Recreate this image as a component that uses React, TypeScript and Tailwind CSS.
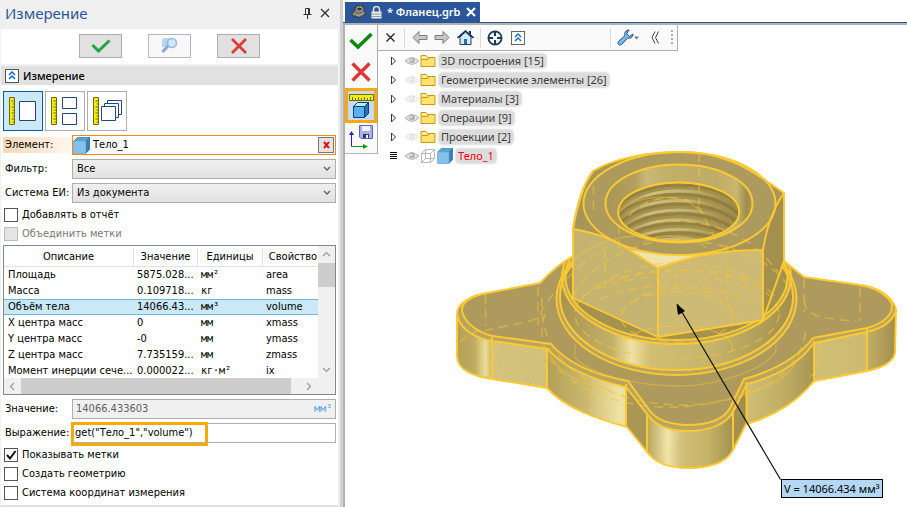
import React, { useState } from "react";

const UI = "font-['DejaVu_Sans_Condensed','DejaVu_Sans',sans-serif] text-[11px] leading-4";
const SEGOE = "font-['Noto_Sans',sans-serif]";

function Cube({ size = 17 }: { size?: number }) {
  return (
    <svg width={size} height={size} viewBox="0 0 17 17" className="shrink-0" aria-hidden="true">
      <path d="M0.5 4.5 4.5 0.5H16.5L12.5 4.5Z" fill="#5aa5d8" stroke="#4a90c4" />
      <path d="M12.5 4.5 16.5 0.5V12.5L12.5 16.5Z" fill="#3a7eb6" stroke="#3a7eb6" />
      <path d="M0.5 4.5H12.5V16.5H0.5Z" fill="#85c0e6" stroke="#7ab6de" />
    </svg>
  );
}

function Ruler() {
  return (
    <g>
      <path d="M1 1H6V28H1Z" fill="#f3ee0c" stroke="#6e6a1a" />
      <path d="M3 4.5H6M4 7.5H6M3 10.5H6M4 13.5H6M3 16.5H6M4 19.5H6M3 22.5H6M4 25.5H6" stroke="#6e6a1a" />
    </g>
  );
}

function ModeButton({ label, active = false, children }: { label: string; active?: boolean; children: React.ReactNode }) {
  return (
    <button
      type="button"
      aria-label={label}
      aria-pressed={active}
      className={`flex size-10 items-center justify-start border pl-1 ${active ? "border-[#005a9e] bg-[#cce8f7]" : "border-[#adadad] bg-white"}`}
    >
      <svg width="32" height="30" viewBox="0 0 32 30" fill="none">
        <g transform="translate(0.5 0.5)">
          <Ruler />
          <g stroke="#1c4a7e" fill="white">{children}</g>
        </g>
      </svg>
    </button>
  );
}

function Check({ id, label, checked = false, disabled = false }: { id: string; label: string; checked?: boolean; disabled?: boolean }) {
  const [on, setOn] = useState(checked);
  return (
    <div className="flex h-[14px] items-center gap-[4px] pl-px">
      <span className="relative flex">
        <input
          id={id}
          type="checkbox"
          checked={on}
          disabled={disabled}
          onChange={() => setOn(!on)}
          className="size-[14px] appearance-none border border-[#555] bg-white disabled:border-[#bcbcbc] disabled:bg-[#e4e4e4]"
        />
        {on && (
          <svg width="14" height="14" viewBox="0 0 14 14" className="pointer-events-none absolute inset-0">
            <path d="M3 7 6 10.5 11.5 3" fill="none" stroke="#111" strokeWidth="2" />
          </svg>
        )}
      </span>
      <label htmlFor={id} className={disabled ? "text-[#787878]" : "text-black"}>{label}</label>
    </div>
  );
}

function Field({ id, label, highlight = false, children }: { id: string; label: string; highlight?: boolean; children: React.ReactNode }) {
  return (
    <div className="flex h-5 items-center">
      <label htmlFor={id} className={`w-[69px] shrink-0 whitespace-nowrap pl-[2px] ${highlight ? "bg-linear-to-r from-[#fbd9b8] to-[#fff7ef]" : ""}`}>
        {label}
      </label>
      {children}
    </div>
  );
}

function Select({ id, options }: { id: string; options: string[] }) {
  return (
    <span className="relative flex h-5 min-w-0 flex-1">
      <select id={id} className="w-full appearance-none border border-[#adadad] bg-linear-to-b from-[#efefef] to-[#e2e2e2] px-1">
        {options.map((o) => (
          <option key={o}>{o}</option>
        ))}
      </select>
      <svg width="8" height="6" viewBox="0 0 8 6" className="pointer-events-none absolute right-[5px] top-[7px]">
        <path d="M1 1 4 4 7 1" fill="none" stroke="#606060" strokeWidth="1.3" />
      </svg>
    </span>
  );
}

const rows = [
  ["Площадь", "5875.028...", "мм²", "area"],
  ["Масса", "0.109718...", "кг", "mass"],
  ["Объём тела", "14066.43...", "мм³", "volume"],
  ["X центра масс", "0", "мм", "xmass"],
  ["Y центра масс", "-0", "мм", "ymass"],
  ["Z центра масс", "7.735159...", "мм", "zmass"],
  ["Момент инерции сече...", "0.000022...", "кг·м²", "ix"],
];

function Chevron({ d }: { d: string }) {
  return (
    <svg width="9" height="9" viewBox="0 0 9 9" fill="none" stroke="#9a9a9a" strokeWidth="1.2" aria-hidden="true">
      <path d={d} />
    </svg>
  );
}

function PropertyTable() {
  return (
    <div className="flex h-[150px] flex-col border border-[#828790] bg-white">
      <div className="flex min-h-0 flex-1">
        <div className="min-w-0 flex-1 overflow-hidden pt-[2px]">
          <table className="w-[320px] table-fixed border-separate border-spacing-0 whitespace-nowrap">
            <colgroup>
              <col className="w-[130px]" />
              <col className="w-[64px]" />
              <col className="w-[65px]" />
              <col />
            </colgroup>
            <thead>
              <tr className="h-[19px]">
                {["Описание", "Значение", "Единицы", "Свойство"].map((h) => (
                  <th key={h} className="border-b border-r border-[#e2e2e2] p-0 font-normal">{h}</th>
                ))}
              </tr>
            </thead>
            <tbody>
              {rows.map((r, i) => {
                const cell = i === 2 ? "h-4 border-y border-[#6cb8dc] bg-[#cbe8f6] p-0 leading-[14px]" : "h-4 p-0 leading-4";
                return (
                  <tr key={r[0]}>
                    <td className={`${cell} pl-1`}>{r[0]}</td>
                    <td className={`${cell} pl-[3px]`}>{r[1]}</td>
                    <td className={`${cell} pl-[3px] font-['DejaVu_Sans_Mono',monospace] text-[10px]`}>{r[2]}</td>
                    <td className={`${cell} pl-[3px]`}>{r[3]}</td>
                  </tr>
                );
              })}
            </tbody>
          </table>
        </div>
        <div className="flex w-[17px] flex-col items-center bg-[#f0f0f0]">
          <span className="flex h-[17px] items-center"><Chevron d="M1 6 4.5 2.500 8 6" /></span>
          <span className="h-6 w-full bg-[#cdcdcd]" />
          <span className="mt-auto flex h-[17px] items-center"><Chevron d="M1 3 4.5 6.500 8 3" /></span>
        </div>
      </div>
      <div className="flex h-4 items-center bg-[#f0f0f0]">
        <span className="flex w-[17px] justify-center"><Chevron d="M6 1 2.500 4.5 6 8" /></span>
        <span className="h-full flex-1 bg-[#cdcdcd]" />
        <span className="mr-[17px] flex w-[27px] justify-center pl-2"><Chevron d="M3 1 6.500 4.5 3 8" /></span>
      </div>
    </div>
  );
}

function MeasurePanel() {
  return (
    <aside className={`${UI} flex w-[343px] shrink-0 flex-col border-r-[3px] border-[#cfcfcf] bg-[#f0f0f0] pl-px pr-[2px] text-black`}>
      <header className="flex h-[29px] items-center pb-1 pl-1 pr-2">
        <h1 className={`${SEGOE} flex-1 text-[15px] leading-6 text-[#2b579a]`}>Измерение</h1>
        <button type="button" aria-label="Закрепить" className="mr-2">
          <svg width="9" height="12" viewBox="0 0 9 12" fill="none" stroke="#333">
            <path d="M2.500 7V1.500H6.500V7M5.500 1.500V7M0.500 7.500H8.500M4.500 8V12" />
          </svg>
        </button>
        <button type="button" aria-label="Закрыть">
          <svg width="10" height="10" viewBox="0 0 10 10" stroke="#333" strokeWidth="1.3"><path d="M1 1 9 9M9 1 1 9" /></svg>
        </button>
      </header>

      <div className="flex h-[35px] items-center justify-center gap-[26px] bg-white pb-[2px]">
        <button type="button" aria-label="Принять" className="flex h-6 w-[43px] items-center justify-center border border-[#adadad] bg-[#e1e1e1]">
          <svg width="20" height="14" viewBox="0 0 20 14"><path d="M1.500 6 7.500 12 18.500 1.500" fill="none" stroke="#27a243" strokeWidth="3" /></svg>
        </button>
        <button type="button" aria-label="Просмотр" className="flex h-6 w-[43px] items-center justify-center border border-[#b4b8bb] bg-[#f8f8f8]">
          <svg width="17" height="17" viewBox="0 0 17 17">
            <path d="M1 3 3 1H12L10 3V10H1Z" fill="#b4d8ec" />
            <path d="M7 9 1.500 15" stroke="#8aa3d4" strokeWidth="3" />
            <circle cx="11" cy="6" r="4.500" fill="#cfe8f8" stroke="#9db6df" strokeWidth="1.6" />
          </svg>
        </button>
        <button type="button" aria-label="Отменить" className="flex h-6 w-[43px] items-center justify-center border border-[#adadad] bg-[#e1e1e1]">
          <svg width="16" height="16" viewBox="0 0 16 16"><path d="M1 1 15 15M15 1 1 15" stroke="#dc3b3b" strokeWidth="2.800" /></svg>
        </button>
      </div>

      <div className="mt-[2px] flex h-[19px] items-center gap-1 bg-[#e1e1e1] pl-1">
        <button type="button" aria-label="Свернуть" className="flex size-[14px] items-center justify-center border border-[#555] bg-white">
          <svg width="8" height="9" viewBox="0 0 8 9" fill="none" stroke="#0a6cc4" strokeWidth="1.500"><path d="M1 4 4 1 7 4M1 8 4 5 7 8" /></svg>
        </button>
        <h2 className={`${SEGOE} text-[11px] font-medium leading-4`}>Измерение</h2>
      </div>

      <div className="flex flex-1 flex-col gap-1 bg-white pl-[2px] pr-[2px] pt-[6px]">
        <div className="flex gap-[2px]">
          <ModeButton label="Один элемент" active><path d="M11 5H27V24H11Z" /></ModeButton>
          <ModeButton label="Два элемента"><path d="M12 1H26V12H12ZM12 17H26V28H12Z" /></ModeButton>
          <ModeButton label="Несколько элементов">
            <path d="M15 4H29V18H15Z" /><path d="M12 7H26V21H12Z" /><path d="M9 10H23V24H9Z" />
          </ModeButton>
        </div>

        <Field id="element" label="Элемент:" highlight>
          <span className="flex h-5 min-w-0 flex-1 items-center border border-[#f08a1c] bg-white pr-px">
            <Cube />
            <input id="element" defaultValue="Тело_1" className="min-w-0 flex-1 bg-transparent pl-[3px] outline-none" />
            <button type="button" aria-label="Удалить" className="flex size-4 items-center justify-center border border-[#777] bg-[#e4e4e4]">
              <svg width="7" height="8" viewBox="0 0 7 8" stroke="#e81010" strokeWidth="2"><path d="M1 1 6 7M6 1 1 7" /></svg>
            </button>
          </span>
        </Field>
        <Field id="filter" label="Фильтр:"><Select id="filter" options={["Все"]} /></Field>
        <Field id="units" label="Система ЕИ:"><Select id="units" options={["Из документа"]} /></Field>

        <div className="flex flex-col gap-[5px] pt-px">
          <Check id="report" label="Добавлять в отчёт" />
          <Check id="merge" label="Объединить метки" disabled />
        </div>

        <PropertyTable />

        <Field id="value" label="Значение:">
          <span className="flex h-5 min-w-0 flex-1 items-center border border-[#adadad] bg-[#f0f0f0] px-[3px]">
            <input id="value" readOnly defaultValue="14066.433603" className="min-w-0 flex-1 bg-transparent text-[#606060] outline-none" />
            <span className="font-['DejaVu_Sans_Mono',monospace] text-[10px] text-[#5aa5e6]">мм³</span>
          </span>
        </Field>
        <Field id="expression" label="Выражение:">
          <span className="relative flex h-5 min-w-0 flex-1">
            <input id="expression" defaultValue={'get("Тело_1","volume")'} className="w-full border border-[#adadad] bg-white px-[2px] outline-none" />
            <span className="pointer-events-none absolute -left-px -top-px h-6 w-[137px] border-[3px] border-[#f9a90b]" />
          </span>
        </Field>

        <div className="flex flex-col gap-[5px] pt-px">
          <Check id="labels" label="Показывать метки" checked />
          <Check id="geometry" label="Создать геометрию" />
          <Check id="lcs" label="Система координат измерения" />
        </div>
      </div>
      <div className="h-[2px] bg-[#e1e1e1]" />
    </aside>
  );
}

const tree = [
  { label: "3D построения [15]", visible: true },
  { label: "Геометрические элементы [26]", visible: false },
  { label: "Материалы [3]", visible: false },
  { label: "Операции [9]", visible: true },
  { label: "Проекции [2]", visible: false },
];

function Eye({ visible }: { visible: boolean }) {
  return (
    <svg width="14" height="10" viewBox="0 0 14 10" opacity={visible ? 1 : 0.35} className="shrink-0" aria-hidden="true">
      <path d="M0.5 5Q7-2 13.500 5Q7 12 0.5 5Z" fill="#eee" stroke="#bdbdbd" strokeWidth="1.2" />
      <circle cx="7" cy="4.500" r="3" fill="#b4b4b4" />
      <circle cx="6" cy="4" r="1" fill="#f4f4f4" />
    </svg>
  );
}

const treeLabel = "rounded-sm bg-[#dcdcdc] px-[2px] leading-[14px] shadow-[0_0_2px_1px_#dcdcdc]";

function ModelTree() {
  return (
    <ul className={`${SEGOE} relative pl-3 text-[11px] text-[#3c3c3c]`}>
      {tree.map((n) => (
        <li key={n.label} className="flex h-[19px] items-center">
          <button type="button" aria-label="Развернуть" className="mr-2">
            <svg width="7" height="10" viewBox="0 0 7 10"><path d="M1.500 1V9L5.500 5Z" fill="white" stroke="#333" /></svg>
          </button>
          <Eye visible={n.visible} />
          <svg width="16" height="13" viewBox="0 0 16 13" className="ml-px shrink-0" aria-hidden="true">
            <path d="M1 12.500V1.500H6L7.500 3.500H15V12.500Z" fill="#ffe36e" stroke="#c9971c" />
            <path d="M2 5.500H8L9.500 3.500" fill="none" stroke="#c9971c" />
            <path d="M2 2.500H6L7 4H2Z" fill="#fff7b0" />
          </svg>
          <span className={`${treeLabel} ml-[3px]`}>{n.label}</span>
        </li>
      ))}
      <li className="flex h-[19px] items-center">
        <svg width="7" height="8" viewBox="0 0 7 8" className="mr-2" stroke="#111"><path d="M0 0.500H7M0 2.500H7M0 4.500H7M0 6.500H7" /></svg>
        <Eye visible />
        <svg width="14" height="14" viewBox="0 0 14 14" className="ml-[2px] mr-[2px] shrink-0" fill="none" stroke="#b8b8b8">
          <path d="M0.500 4.500 4.500 0.500H13.500L9.500 4.500ZM0.500 4.500V13.500H9.500V4.500M9.500 13.500 13.500 9.500V0.500M4.500 0.500V9.500H13.500M4.500 9.500 0.500 13.500" />
        </svg>
        <Cube size={16} />
        <span className={`${treeLabel} ml-[3px] text-[#f00014]`}>Тело_1</span>
      </li>
    </ul>
  );
}

function SideToolbar() {
  return (
    <div className="flex h-[129px] w-[33px] shrink-0 flex-col items-center border-b border-r border-[#b4b4b4] bg-[#fafafa] border-r-[#a8a8a8]">
      <button type="button" aria-label="Завершить" className="flex h-[31px] items-center">
        <svg width="24" height="18" viewBox="0 0 24 18"><path d="M1.500 8 9 15 22.500 2" fill="none" stroke="#0b8a10" strokeWidth="3.600" /></svg>
      </button>
      <button type="button" aria-label="Отмена" className="flex h-8 items-center">
        <svg width="20" height="20" viewBox="0 0 20 20"><path d="M1.500 1.500 18.500 18.500M18.500 1.500 1.500 18.500" stroke="#dc3838" strokeWidth="3.400" /></svg>
      </button>
      <button type="button" aria-label="Измерить" className="flex h-[35px] w-full shrink-0 items-center justify-center border-[3px] border-[#f9a90b] bg-[#c5daf3]">
        <svg width="25" height="26" viewBox="0 0 25 26">
          <path d="M0.500 1.500H24.500V7.500H0.500Z" fill="#f3ee0c" stroke="#6e6a1a" />
          <path d="M3.500 4V7M6.500 5V7M9.500 4V7M12.500 5V7M15.500 4V7M18.500 5V7M21.500 4V7" stroke="#6e6a1a" />
          <path d="M4.500 13.500 8.500 9.500H19.500L15.500 13.500Z" fill="#b8f0fa" stroke="#123f66" />
          <path d="M15.500 13.500 19.500 9.500V20.500L15.500 24.500Z" fill="#2d72b4" stroke="#123f66" />
          <path d="M4.500 13.500H15.500V24.500H4.500Z" fill="#5ab0f2" stroke="#123f66" />
        </svg>
      </button>
      <button type="button" aria-label="Сохранить СК" className="flex h-7 items-center pt-[2px]">
        <svg width="24" height="26" viewBox="0 0 24 26">
          <path d="M2.500 21.500V9" stroke="#1f24d8" /><path d="M0 10 2.500 6 5 10Z" fill="#1f24d8" />
          <path d="M2.500 21.500H15" stroke="#079a10" /><path d="M14 19 19 21.500 14 24Z" fill="#079a10" />
          <path d="M10.500 0.500H23.500V13.500H12L10.500 12Z" fill="#a9b0ee" stroke="#5c63bd" />
          <path d="M13 1H21V6H13Z" fill="#f2f3ff" /><path d="M14 9H20V13H14Z" fill="#333a58" /><path d="M17 10H19V13H17Z" fill="#fff" />
        </svg>
      </button>
    </div>
  );
}

function TopToolbar() {
  return (
    <div className="flex h-[26px] w-[300px] items-center border-b border-r border-[#b0b0b0] bg-[#fafafa] pl-2 pr-1">
      <button type="button" aria-label="Закрыть дерево">
        <svg width="9" height="9" viewBox="0 0 9 9" stroke="#222" strokeWidth="1.300"><path d="M0.500 0.500 8.500 8.500M8.500 0.500 0.500 8.500" /></svg>
      </button>
      <span className="ml-[9px] mr-[7px] h-5 w-px bg-[#dcdcdc]" />
      <button type="button" aria-label="Назад" className="mr-[6px]">
        <svg width="16" height="15" viewBox="0 0 16 15"><path d="M1 7.500 7 1.500V5.500H15V9.500H7V13.500Z" fill="#c8c8c8" stroke="#7c7c7c" /></svg>
      </button>
      <button type="button" aria-label="Вперёд" className="mr-[7px]">
        <svg width="16" height="15" viewBox="0 0 16 15"><path d="M15 7.500 9 1.500V5.500H1V9.500H9V13.500Z" fill="#c8c8c8" stroke="#7c7c7c" /></svg>
      </button>
      <button type="button" aria-label="Домой">
        <svg width="17" height="15" viewBox="0 0 17 15">
          <path d="M3 7V14.500H14V7L8.500 2Z" fill="#d5eafa" stroke="#1a3c6a" />
          <path d="M0.500 8 8.500 1 16.500 8" fill="none" stroke="#123462" strokeWidth="1.600" />
          <path d="M12 1H14V5L12 3Z" fill="#123462" /><path d="M7 9H10V14H7Z" fill="#2c6cad" />
        </svg>
      </button>
      <span className="ml-[6px] mr-[6px] h-5 w-px bg-[#dcdcdc]" />
      <button type="button" aria-label="Центрировать" className="mr-2">
        <svg width="16" height="16" viewBox="0 0 16 16" fill="none" stroke="#173b5e">
          <circle cx="8" cy="8" r="6.600" strokeWidth="1.800" /><path d="M8 1V6M8 10V15M1 8H6M10 8H15" strokeWidth="2" />
        </svg>
      </button>
      <button type="button" aria-label="Свернуть всё" className="flex size-[14px] items-center justify-center border border-[#666] bg-white">
        <svg width="8" height="9" viewBox="0 0 8 9" fill="none" stroke="#0a6cc4" strokeWidth="1.400"><path d="M1 4 4 1 7 4M1 8 4 5 7 8" /></svg>
      </button>
      <span className="ml-auto mr-[6px] h-5 w-px bg-[#dcdcdc]" />
      <button type="button" aria-label="Настройки" className="flex items-center">
        <svg width="17" height="17" viewBox="0 0 17 17">
          <path d="M12 1C9 1 7 3.500 8 6.500L1.500 12.500C0 14.500 2 17 4.500 15.500L10.500 9C13.500 10 16 8 16 5L12.500 7.500 9.800 4.500Z" fill="#79bdf0" stroke="#1a4a80" />
        </svg>
        <svg width="5" height="4" viewBox="0 0 5 4"><path d="M0 0.500H5L2.500 3.500Z" fill="#777" /></svg>
      </button>
      <button type="button" aria-label="Скрыть панель" className="ml-3">
        <svg width="9" height="13" viewBox="0 0 9 13" fill="none" stroke="#444"><path d="M4 0.500 1 6.500 4 12.500M7.500 0.500 4.500 6.500 7.500 12.500" /></svg>
      </button>
      <svg width="2" height="15" viewBox="0 0 2 15" className="ml-[11px]" fill="#ababab">
        <path d="M0 0H2V2H0ZM0 4H2V6H0ZM0 8H2V10H0ZM0 12H2V14H0Z" />
      </svg>
    </div>
  );
}

const silhouette =
  "M457 314C457 303 470 296 487 293L540 283C551 271 562 262 573 256V229C576 207 583 185 593 171C615 158 648 152 680 152C722 152 748 168 765 180L784 193V261L804 277L860 285C876 287 892 295 896 309L895 353C893 363 881 368 867 371L814 381C800 399 776 416 746 424L733 450C726 463 708 468 688 468C669 468 655 463 647 452L627 427C593 418 564 407 547 388L492 379C474 376 458 371 457 357Z";
const rimOuter =
  "M457 314C459 329 475 338 492 341L548 349C562 367 590 379 626 387L647 414C656 427 672 431 688 431C710 431 726 424 733 412L747 384C778 376 800 363 814 343L867 332C883 328 894 321 896 309";
const rimInner =
  "M487 293C470 296 461 303 462 311C465 324 479 333 493 336L551 344C568 364 594 375 628 381L650 411C658 421 670 424 686 425C709 425 724 419 730 408L744 379C777 370 799 356 813 338L867 328C885 323 893 314 892 304C888 295 874 287 860 285";
const topFace = rimInner + "L804 277L784 261L573 256L540 283Z";

function FlangeModel() {
  return (
    <svg width="457" height="367" viewBox="450 140 457 367" className="block" role="img" aria-label="Фланец">
      <defs>
        <linearGradient id="side" gradientUnits="userSpaceOnUse" x1="457" y1="0" x2="896" y2="0">
          <stop offset="0" stopColor="#b3a05a" /><stop offset="0.040" stopColor="#bfac60" />
          <stop offset="0.065" stopColor="#eadb91" /><stop offset="0.080" stopColor="#c5b265" />
          <stop offset="0.080" stopColor="#d2c077" /><stop offset="0.204" stopColor="#cfbd72" />
          <stop offset="0.206" stopColor="#b29f59" /><stop offset="0.300" stopColor="#cdba70" />
          <stop offset="0.370" stopColor="#eee1a0" /><stop offset="0.386" stopColor="#eadb95" />
          <stop offset="0.387" stopColor="#ab9755" /><stop offset="0.432" stopColor="#ab9755" />
          <stop offset="0.434" stopColor="#b9a55d" /><stop offset="0.480" stopColor="#f0e3a5" />
          <stop offset="0.510" stopColor="#d0be75" /><stop offset="0.570" stopColor="#c6b469" />
          <stop offset="0.628" stopColor="#a59150" /><stop offset="0.660" stopColor="#a08c4e" />
          <stop offset="0.661" stopColor="#d0be74" /><stop offset="0.740" stopColor="#c1ae65" />
          <stop offset="0.812" stopColor="#a99653" /><stop offset="0.814" stopColor="#d1bf77" />
          <stop offset="0.933" stopColor="#cdbb71" /><stop offset="0.935" stopColor="#c1ae65" />
          <stop offset="1" stopColor="#a28e4d" />
        </linearGradient>
        <linearGradient id="collar" gradientUnits="userSpaceOnUse" x1="557" y1="0" x2="797" y2="0">
          <stop offset="0" stopColor="#a69251" /><stop offset="0.230" stopColor="#c3b068" />
          <stop offset="0.310" stopColor="#efe2a4" /><stop offset="0.390" stopColor="#cfbe74" />
          <stop offset="0.650" stopColor="#c6b469" /><stop offset="1" stopColor="#a18d4e" />
        </linearGradient>
        <linearGradient id="chamfer" x1="0" y1="0" x2="1" y2="0">
          <stop offset="0" stopColor="#a99655" /><stop offset="0.200" stopColor="#b3a05b" />
          <stop offset="0.280" stopColor="#c9b876" /><stop offset="0.400" stopColor="#c2b069" />
          <stop offset="0.750" stopColor="#bfac67" /><stop offset="0.890" stopColor="#c8b671" />
          <stop offset="0.960" stopColor="#a08c4c" /><stop offset="1" stopColor="#a99555" />
        </linearGradient>
        <linearGradient id="thread" x1="0" y1="0" x2="1" y2="0">
          <stop offset="0" stopColor="#a08d4c" /><stop offset="0.280" stopColor="#cfbf81" />
          <stop offset="0.550" stopColor="#c6b573" /><stop offset="1" stopColor="#97833f" />
        </linearGradient>
        <linearGradient id="shade" x1="0" y1="0" x2="1" y2="0">
          <stop offset="0" stopColor="#a08d4c" /><stop offset="0.500" stopColor="#b3a05c" /><stop offset="1" stopColor="#9c8846" />
        </linearGradient>
        <filter id="grain" x="0" y="0" width="1" height="1">
          <feTurbulence type="fractalNoise" baseFrequency="0.8" numOctaves="2" seed="4" result="n" />
          <feColorMatrix in="n" values="0 0 0 0 1  0 0 0 0 0.960  0 0 0 0 0.700  0 0 0 -2.200 1.300" />
          <feComposite in2="SourceGraphic" operator="in" />
        </filter>
        <clipPath id="hole"><ellipse cx="678.700" cy="212" rx="60.500" ry="29.500" /></clipPath>
        <clipPath id="body"><path d={silhouette} /></clipPath>
        <clipPath id="below"><path d="M545 256H573L573 298 657 337 763 320 783 261H810V390H545Z" /></clipPath>
      </defs>

      <path d={silhouette} fill="url(#side)" />
      <g fill="#fff" filter="url(#grain)" opacity="0.250">
        <path d="M480 340 548 350V388L480 377ZM590 377 626 387V426L590 414ZM660 424 684 431V468L665 465Z" />
      </g>
      <path d={rimOuter + "L860 285L804 277L573 256L540 283L487 293Z"} fill="#b8a560" />
      <path d={topFace} fill="#ad9a5c" />

      <g clipPath="url(#body)">
        <g clipPath="url(#below)">
          <ellipse cx="676.500" cy="299" rx="120" ry="76" fill="#b8a560" />
          <ellipse cx="676.500" cy="297" rx="116.500" ry="73" fill="url(#collar)" />
          <ellipse cx="676.500" cy="277" rx="114.500" ry="67" fill="#baa760" />
          <ellipse cx="676.500" cy="277" rx="111" ry="63" fill="#a5924f" />
        </g>
      </g>

      <path d="M573 229C576 207 583 185 593 171C615 158 648 152 680 152C722 152 748 168 765 180L784 193 763 250 658 268Z" fill="#a8955a" />
      <path d="M573 229C590 232 607 236 623 246L658 268V337L573 298Z" fill="#c5b370" />
      <path d="M658 268 670 264C692 256 720 250 763 250V320L658 337Z" fill="#ccba75" />
      <path d="M763 250C767 226 774 207 784 193V261L763 320Z" fill="#a38f4f" />
      <path d="M628 249Q660 257 705 254L658 268Z" fill="#efe2ac" />
      <ellipse cx="679.500" cy="203.500" rx="96" ry="51.500" fill="#ad9a5d" />
      <ellipse cx="679" cy="203.500" rx="73.500" ry="39" fill="url(#chamfer)" />
      <ellipse cx="678.700" cy="212" rx="60.500" ry="29.500" fill="url(#shade)" />
      <g clipPath="url(#hole)" fill="none">
        {[0, 1, 2, 3, 4, 5].map((i) => (
          <g key={i}>
            <ellipse cx="679" cy={214 + i * 9.600} rx="61" ry="29" stroke="#8a773b" strokeWidth="3.500" opacity="0.700" />
            <ellipse cx="679" cy={217 + i * 9.600} rx="61" ry="29" stroke="#a4914e" strokeWidth="2.500" />
            <ellipse cx="679" cy={220 + i * 9.600} rx="61" ry="29" stroke="url(#thread)" strokeWidth="2.800" />
          </g>
        ))}
      </g>

      <g clipPath="url(#body)" fill="none" stroke="#f6c53b" strokeWidth="1.500" opacity="0.550" strokeDasharray="9 6">
        <path d="M485.500 294V326M538 287V325M593.500 186V214M699 153V205M727 245V300M619 225V256M605 250V292M804 279V312M860 288V321" />
        <path d="M484 331C505 325 525 324 538 318C546 300 568 272 606 247M460 342Q470 333 486 328" />
        <path d="M573 297C591 260 640 240 676 240C729 240 778 263 790 290M575 306C600 276 645 261 684 263C731 265 762 281 775 297" />
        <path d="M542 298C539 331 556 361 583 377C624 404 677 411 726 400C769 391 801 367 806 330M545 314C533 349 557 379 601 395C651 415 718 409 756 387" />
        <ellipse cx="677" cy="317" rx="56" ry="25" />
        <ellipse cx="677" cy="314" rx="102" ry="44" />
        <path d="M596 289C645 271 716 271 758 292M600 299C650 279 708 280 761 306M620 279C650 269 711 267 753 280" />
        <path d="M805 300C802 316 825 319 856 321M820 345Q823 368 810 377" />
        <path d="M621 316C637 278 727 278 737 320M656 221Q700 219 729 232C748 239 765 255 778 272M629 216C645 196 685 190 700 209L718 244" />
      </g>
      <g fill="none" stroke="#f6c53b" strokeWidth="1.300" opacity="0.450">
        <path d="M575 345V358C590 373 633 386 679 386C721 386 769 367 776 350V340" />
        <path d="M619 352C615 343 633 328 672 326C712 325 735 337 732 351M548 350C555 371 580 386 611 390M800 350C798 370 776 386 748 393" />
        <path d="M620 211C638 194 684 190 703 214M642 243C660 232 694 234 706 248M573 261C589 245 613 238 635 236" />
      </g>

      <g fill="none" stroke="#fdca32" strokeWidth="1.900" strokeLinejoin="round">
        <path d={silhouette} />
        <path d={rimOuter} />
        <path d={rimInner} />
        <path d="M492 337V379M547 349V388M626 384V427M647 413V453M733 410V450M746.500 382V424M814 341V381M867 328V370" />
        <g clipPath="url(#body)">
          <g clipPath="url(#below)">
            <ellipse cx="676.500" cy="299" rx="120" ry="76" />
            <ellipse cx="676.500" cy="297" rx="116.500" ry="73" />
            <ellipse cx="676.500" cy="277" rx="114.500" ry="67" />
            <ellipse cx="676.500" cy="277" rx="111" ry="63" />
          </g>
        </g>
        <path d="M573 229V298L658 337 763 320 784 261M658 268V337M763 250V320" />
        <path d="M593 171C583 184 577 207 573 229C590 232 607 236 623 246L658 268 670 264C692 256 720 250 763 250C767 226 774 207 784 193" />
        <ellipse cx="679.500" cy="203.500" rx="96" ry="51.500" />
        <ellipse cx="679" cy="203.500" rx="73.500" ry="39" />
        <ellipse cx="678.700" cy="212" rx="60.500" ry="29.500" />
      </g>

      <path d="M677.500 304.500 780.500 479.500" stroke="#111" strokeWidth="1.200" />
      <path d="M676.500 303.500 685 311 678 315Z" fill="#000" />
    </svg>
  );
}

function Workspace() {
  return (
    <main className="flex min-w-0 flex-1 flex-col bg-white">
      <div className="flex h-[23px] items-end border-b border-[#2b579a] pl-[2px]">
        <div className="flex h-5 items-center gap-1 bg-[#2b579a] pl-[6px] pr-1 text-white">
          <svg width="16" height="14" viewBox="0 0 16 14" aria-hidden="true">
            <path d="M1 8 4 5 5 1 10 0 13 3V6L15 8 12 11 8 13 5 11 1 11Z" fill="#77796f" stroke="#34383c" />
            <ellipse cx="8.500" cy="4" rx="3" ry="2" fill="#30343a" stroke="#b8b8a8" />
            <path d="M3 9Q8 12 13 8" fill="none" stroke="#b8b8a8" />
          </svg>
          <svg width="11" height="13" viewBox="0 0 11 13" aria-hidden="true">
            <path d="M2.500 6V3.500A3 3 0 0 1 8.500 3.500V6" fill="none" stroke="#e4e4e4" strokeWidth="1.500" />
            <path d="M0.500 5.500H10.500V12.500H0.500Z" fill="#ececec" /><path d="M1 8H10M1 10.500H10" stroke="#9a9a9a" />
          </svg>
          <span className={`${SEGOE} px-px text-[11px] font-semibold leading-4`}>* Фланец.grb</span>
          <button type="button" aria-label="Закрыть вкладку">
            <svg width="10" height="10" viewBox="0 0 10 10" stroke="white" strokeWidth="2"><path d="M1 1 9 9M9 1 1 9" /></svg>
          </button>
        </div>
      </div>
      <div className="relative flex flex-1 items-start overflow-hidden border-l-2 border-t-2 border-[#b0b0b0]">
        <div className="absolute left-[105px] top-[115px]">
          <FlangeModel />
          <output className={`${SEGOE} absolute left-[331px] top-[339px] h-[19px] whitespace-nowrap border border-black bg-[#b4d7f5] px-[2px] text-[11px] leading-[17px] text-black`}>
            V = 14066.434 мм³
          </output>
        </div>
        <div className="relative flex items-start">
          <SideToolbar />
          <div>
            <TopToolbar />
            <ModelTree />
          </div>
        </div>
      </div>
    </main>
  );
}

export default function App() {
  return (
    <div className="flex min-h-screen bg-white">
      <MeasurePanel />
      <Workspace />
    </div>
  );
}
